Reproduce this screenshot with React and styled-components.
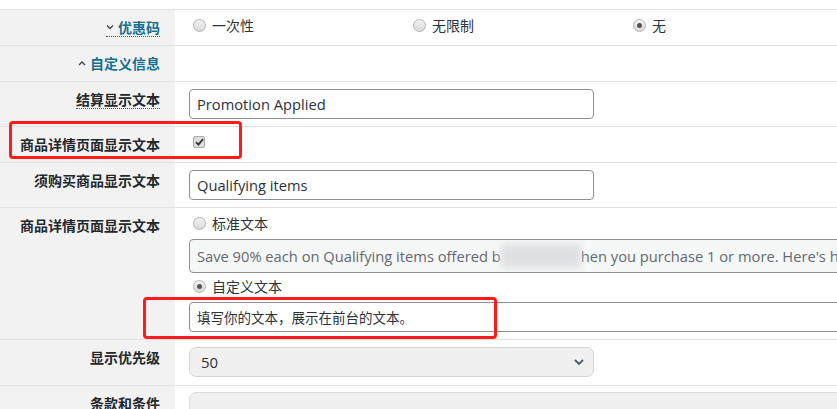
import React from 'react';
import styled, { createGlobalStyle } from 'styled-components';

const GlobalStyle = createGlobalStyle`
  body {
    margin: 0;
    background: #fff;
    overflow: hidden;
    font-family: "Open Sans", "Noto Sans CJK SC", sans-serif;
    color: #2c3338;
  }
  * { box-sizing: border-box; }
`;

const Page = styled.div`
  position: relative;
  width: 837px;
  height: 409px;
  overflow: hidden;
`;

const Spacer = styled.div`
  height: 10px;
  border-bottom: 1px solid #e2e2e2;
`;

const Row = styled.div`
  display: grid;
  grid-template-columns: 175px 1fr;
  border-bottom: 1px solid #e2e2e2;
`;

const Label = styled.div`
  background: #f2f2f2;
  padding: 7px 15px 8px 0;
  display: flex;
  justify-content: flex-end;
  align-items: flex-start;
  font-family: "Noto Sans CJK SC", sans-serif;
  font-weight: 700;
  font-size: 14px;
  line-height: 20px;
  color: #23282d;
`;

const Cell = styled.div`
  padding: ${p => p.$pad || '7px 0 7px 14px'};
  min-width: 0;
  overflow: hidden;
`;

const Toggle = styled.span`
  display: flex;
  align-items: center;
  gap: 4px;
  height: 20px;
  color: #16708f;
  border-bottom: ${p => (p.$dotted ? '1px dotted #555' : 'none')};
  svg { display: block; }
`;

const Hint = styled.span`
  display: block;
  height: 20px;
  border-bottom: 1px dotted #555;
`;

const RadioGroup = styled.div`
  display: grid;
  grid-template-columns: repeat(3, 220px);
`;

const Option = styled.label`
  display: flex;
  align-items: center;
  gap: 6px;
  padding-left: 4px;
  height: 20px;
  font-family: "Noto Sans CJK SC", sans-serif;
  font-size: 14px;
  line-height: 20px;
  color: #2c3338;
`;

const Dot = styled.span`
  width: 13px;
  height: 13px;
  flex: none;
  border-radius: 50%;
  border: 1px solid #b4b4b4;
  background: linear-gradient(#f4f4f4, #d9d9d9);
  display: flex;
  align-items: center;
  justify-content: center;
  &::after {
    content: '';
    width: 5px;
    height: 5px;
    border-radius: 50%;
    background: ${p => (p.$on ? '#555' : 'transparent')};
  }
`;

const Check = styled.span`
  display: flex;
  align-items: center;
  justify-content: center;
  width: 12px;
  height: 12px;
  margin: 4px 0 0 4px;
  border: 1px solid #a9a9a9;
  border-radius: 2px;
  background: #dedede;
`;

const Input = styled.div`
  width: ${p => p.$w || '405px'};
  height: ${p => p.$h || '30px'};
  border: 1px solid #8c8f94;
  border-radius: 4px;
  padding: 0 7px;
  display: flex;
  align-items: center;
  white-space: nowrap;
  overflow: hidden;
  font-size: 14.7px;
  background: ${p => (p.$muted ? '#f6f7f7' : '#fff')};
  color: ${p => (p.$muted ? '#646970' : '#2c3338')};
  margin-top: ${p => p.$mt || '0'};
`;

const Cjk = styled.span`
  font-family: "Noto Sans CJK SC", sans-serif;
  font-size: 13.5px;
`;

const Blur = styled.span`
  display: inline-block;
  width: 80px;
  height: 24px;
  background: #dfe1e3;
  filter: blur(3px);
  flex: none;
`;

const Stack = styled.div`
  display: flex;
  flex-direction: column;
`;

const Select = styled.div`
  width: 405px;
  height: 30px;
  border: 1px solid #d6d6d6;
  border-radius: 7px;
  background: #f0f0f1;
  display: flex;
  align-items: center;
  justify-content: space-between;
  padding: 0 8px 0 11px;
  font-size: 15px;
  color: #2c3338;
`;

const Box = styled.div`
  width: 800px;
  height: 40px;
  margin-top: 6px;
  border: 1px solid #dcdcdc;
  border-radius: 7px;
  background: #f0f0f1;
`;

const Mark = styled.div`
  position: absolute;
  left: ${p => p.$x}px;
  top: ${p => p.$y}px;
  width: ${p => p.$w}px;
  height: ${p => p.$h}px;
  border: 3px solid #ff1b1b;
  border-radius: 4px;
  pointer-events: none;
`;

const Chevron = ({ up }) => (
  <svg width="8" height="6" viewBox="0 0 8 6">
    <path d={up ? 'M1 5 L4 2 L7 5' : 'M1 1.5 L4 4.5 L7 1.5'} fill="none" stroke="#3c434a" strokeWidth="1.3" />
  </svg>
);

function Radio({ on, children }) {
  return (
    <Option>
      <Dot $on={on} />
      {children}
    </Option>
  );
}

export default function App() {
  return (
    <Page>
      <GlobalStyle />
      <Spacer />
      <Row>
        <Label>
          <Toggle $dotted>
            <Chevron />
            优惠码
          </Toggle>
        </Label>
        <Cell $pad="5px 0 10px 14px">
          <RadioGroup>
            <Radio>一次性</Radio>
            <Radio>无限制</Radio>
            <Radio on>无</Radio>
          </RadioGroup>
        </Cell>
      </Row>
      <Row>
        <Label>
          <Toggle>
            <Chevron up />
            自定义信息
          </Toggle>
        </Label>
        <Cell />
      </Row>
      <Row>
        <Label>
          <Hint>结算显示文本</Hint>
        </Label>
        <Cell>
          <Input>Promotion Applied</Input>
        </Cell>
      </Row>
      <Row>
        <Label>商品详情页面显示文本</Label>
        <Cell $pad="5px 0 10px 14px">
          <Check>
            <svg width="9" height="8" viewBox="0 0 9 8">
              <path d="M1 4.2 L3.4 6.6 L8 1.2" fill="none" stroke="#333" strokeWidth="1.8" />
            </svg>
          </Check>
        </Cell>
      </Row>
      <Row>
        <Label>须购买商品显示文本</Label>
        <Cell>
          <Input>Qualifying items</Input>
        </Cell>
      </Row>
      <Row>
        <Label>商品详情页面显示文本</Label>
        <Cell $pad="5px 0 7px 14px">
          <Stack>
            <Radio>标准文本</Radio>
            <Input $w="800px" $h="34px" $mt="6px" $muted>
              Save 90% each on Qualifying items offered b<Blur />hen you purchase 1 or more. Here's how
            </Input>
            <Cell $pad="3px 0 0 0">
              <Radio on>自定义文本</Radio>
            </Cell>
            <Input $w="800px" $mt="6px">
              <Cjk>填写你的文本，展示在前台的文本。</Cjk>
            </Input>
          </Stack>
        </Cell>
      </Row>
      <Row>
        <Label>显示优先级</Label>
        <Cell $pad="7px 0 8px 14px">
          <Select>
            50
            <svg width="12" height="8" viewBox="0 0 12 8">
              <path d="M2 2 L6 6 L10 2" fill="none" stroke="#50575e" strokeWidth="1.8" />
            </svg>
          </Select>
        </Cell>
      </Row>
      <Row>
        <Label>条款和条件</Label>
        <Cell $pad="0 0 0 14px">
          <Box />
        </Cell>
      </Row>
      <Mark $x={9} $y={121} $w={233} $h={38} />
      <Mark $x={143} $y={297} $w={354} $h={42} />
    </Page>
  );
}
